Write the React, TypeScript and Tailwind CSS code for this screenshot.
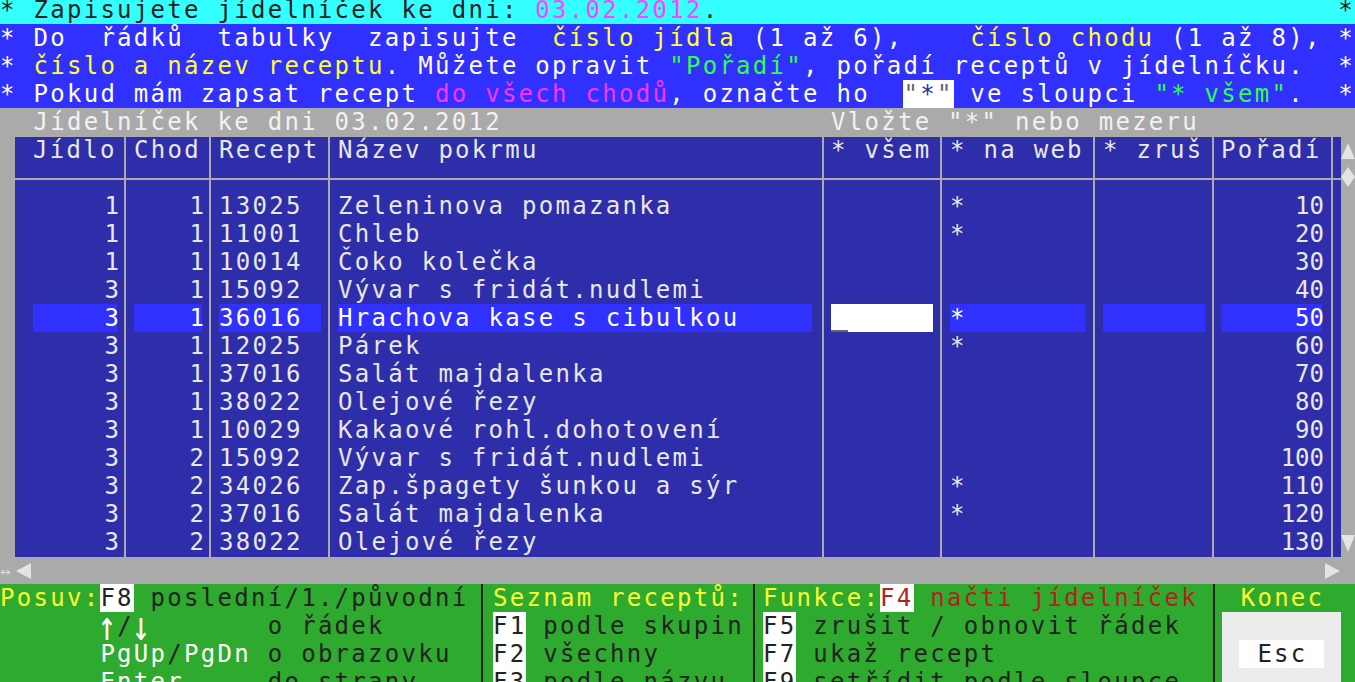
type Col = {
  w: string;
  pl: string;
  cw: string;
  head: string;
  align: string;
};

// column geometry taken from the grid lines of the screen
const cols: Col[] = [
  { w: "w-[111px]", pl: "pl-[18px]", cw: "w-[84px]", head: "Jídlo", align: "text-right" },
  { w: "w-[85px]", pl: "pl-[8px]", cw: "w-[68px]", head: "Chod", align: "text-right" },
  { w: "w-[119px]", pl: "pl-[8px]", cw: "w-[102px]", head: "Recept", align: "text-left" },
  { w: "w-[494px]", pl: "pl-[8px]", cw: "w-[474px]", head: "Název pokrmu", align: "text-left" },
  { w: "w-[118px]", pl: "pl-[7px]", cw: "w-[102px]", head: "* všem", align: "text-left" },
  { w: "w-[153px]", pl: "pl-[8px]", cw: "w-[135px]", head: "* na web", align: "text-left" },
  { w: "w-[119px]", pl: "pl-[8px]", cw: "w-[102px]", head: "* zruš", align: "text-left" },
  { w: "w-[119px]", pl: "pl-[7px]", cw: "w-[101px]", head: "Pořadí", align: "text-right" },
];

const rows: string[][] = [
  ["1", "1", "13025", "Zeleninova pomazanka", "", "*", "", "10"],
  ["1", "1", "11001", "Chleb", "", "*", "", "20"],
  ["1", "1", "10014", "Čoko kolečka", "", "", "", "30"],
  ["3", "1", "15092", "Vývar s fridát.nudlemi", "", "", "", "40"],
  ["3", "1", "36016", "Hrachova kase s cibulkou", "", "*", "", "50"],
  ["3", "1", "12025", "Párek", "", "*", "", "60"],
  ["3", "1", "37016", "Salát majdalenka", "", "", "", "70"],
  ["3", "1", "38022", "Olejové řezy", "", "", "", "80"],
  ["3", "1", "10029", "Kakaové rohl.dohotovení", "", "", "", "90"],
  ["3", "2", "15092", "Vývar s fridát.nudlemi", "", "", "", "100"],
  ["3", "2", "34026", "Zap.špagety šunkou a sýr", "", "*", "", "110"],
  ["3", "2", "37016", "Salát majdalenka", "", "*", "", "120"],
  ["3", "2", "38022", "Olejové řezy", "", "", "", "130"],
];

const SELECTED = 4;

function Key({ children, red = false }: { children: React.ReactNode; red?: boolean }) {
  return (
    <span className={red ? "bg-white text-[#b22222]" : "bg-white text-[#222222]"}>
      {children}
    </span>
  );
}

function Table() {
  return (
    <div className="flex h-[420px] bg-[#2e2eaa] text-[#e8e8e8]">
      {cols.map((c, ci) => (
        <div key={ci} className={"flex flex-col border-r-2 border-[#aaaaaa] " + c.w}>
          <div className={"h-[43px] border-b-2 border-[#aaaaaa] " + c.pl}>
            <div className={"whitespace-pre leading-[26px] " + c.cw}>{c.head}</div>
          </div>
          <div className="pt-[12px]">
            {rows.map((r, ri) => {
              const sel = ri === SELECTED;
              if (sel && ci === 4) {
                return (
                  <div key={ri} className={"h-[28px] " + c.pl}>
                    <div className={"relative h-full bg-white " + c.cw}>
                      <div className="absolute bottom-0 left-0 h-[2px] w-[17px] bg-[#666666]" />
                    </div>
                  </div>
                );
              }
              return (
                <div key={ri} className={"h-[28px] " + c.pl}>
                  <div
                    className={
                      "h-full whitespace-pre " +
                      c.cw +
                      " " +
                      c.align +
                      (c.align === "text-right" ? " -tracking-normal pr-[0px]" : "") +
                      (sel ? " bg-[#3030ff] text-white" : "")
                    }
                  >
                    {c.align === "text-right" ? (
                      <span className="-mr-[2px] inline-block">{r[ci]}</span>
                    ) : (
                      r[ci]
                    )}
                  </div>
                </div>
              );
            })}
          </div>
        </div>
      ))}
      {/* thin strip between last column and the scrollbar */}
      <div className="w-[8px]">
        <div className="h-[43px] border-b-2 border-[#aaaaaa]" />
      </div>
    </div>
  );
}

function VScroll() {
  return (
    <div className="flex w-[14px] flex-col pt-[6px] pb-[5px]">
      <svg width="14" height="16" viewBox="0 0 14 16">
        <polygon points="7,0 14,16 0,16" fill="#e4e4e4" />
      </svg>
      <svg width="14" height="20" viewBox="0 0 14 20" className="mt-[8px]">
        <polygon points="7,0 14,10 7,20 0,10" fill="#e4e4e4" />
      </svg>
      <div className="flex-1" />
      <svg width="14" height="17" viewBox="0 0 14 17">
        <polygon points="0,0 14,0 7,17" fill="#e4e4e4" />
      </svg>
    </div>
  );
}

export default function App() {
  return (
    <div className="h-[682px] w-[1355px] overflow-hidden bg-[#aaaaaa] font-['DejaVu_Sans_Mono',monospace] text-[24px] leading-[28px] tracking-[2.28px]">
      {/* info header */}
      <div className="flex h-[24px] justify-between whitespace-pre bg-[#33ffff] leading-[20px] text-[#222222]">
        <span>
          * Zapisujete jídelníček ke dni: <span className="text-[#ff44ff]">03.02.2012</span>.
        </span>
        <span>*</span>
      </div>
      <div className="bg-[#3030ff] text-white">
        <div className="flex h-[28px] justify-between whitespace-pre">
          <span>
            {"* Do  řádků  tabulky  zapisujte  "}
            <span className="text-[#ffff33]">číslo jídla</span>
            {" (1 až 6),    "}
            <span className="text-[#ffff33]">číslo chodu</span>
            {" (1 až 8),"}
          </span>
          <span>*</span>
        </div>
        <div className="flex h-[28px] justify-between whitespace-pre">
          <span>
            {"* "}
            <span className="text-[#ffff33]">číslo a název receptu</span>
            {". Můžete opravit "}
            <span className="text-[#33ff44]">"Pořadí"</span>
            {", pořadí receptů v jídelníčku."}
          </span>
          <span>*</span>
        </div>
        <div className="flex h-[28px] justify-between whitespace-pre">
          <span>
            {"* Pokud mám zapsat recept "}
            <span className="text-[#ff33ff]">do všech chodů</span>
            {", označte ho  "}
            <span className="bg-white text-[#666666]">
              "<span className="text-[#2e2eaa]">*</span>"
            </span>
            {" ve sloupci "}
            <span className="text-[#33ff44]">"* všem"</span>
            {"."}
          </span>
          <span>*</span>
        </div>
      </div>

      {/* table caption */}
      <div className="flex h-[29px] whitespace-pre text-[#f2f2f2]">
        <span className="w-[831px]">{"  Jídelníček ke dni 03.02.2012"}</span>
        <span>Vložte "*" nebo mezeru</span>
      </div>

      {/* grid */}
      <div className="flex pl-[15px]">
        <Table />
        <VScroll />
      </div>

      {/* horizontal scrollbar */}
      <div className="flex h-[27px] items-center">
        <span className="w-[16px] text-[17px] leading-[14px] tracking-normal text-[#dcdcdc]">↔</span>
        <svg width="15" height="16" viewBox="0 0 15 16">
          <polygon points="0,8 15,0 15,16" fill="#e4e4e4" />
        </svg>
        <div className="flex-1" />
        <svg width="15" height="16" viewBox="0 0 15 16" className="mr-[15px]">
          <polygon points="0,0 15,8 0,16" fill="#e4e4e4" />
        </svg>
      </div>

      {/* key help */}
      <div className="flex h-[98px] overflow-hidden whitespace-pre bg-[#2eaa2e] text-[#222222]">
        <div className="w-[483px] border-r-2 border-[#222222]">
          <div className="h-[28px]">
            <span className="text-[#ffff33]">Posuv:</span>
            <Key>F8</Key>
            {" poslední/1./původní"}
          </div>
          <div className="h-[28px]">
            {"      "}
            <span className="inline-block scale-x-[1.3] scale-y-[1.7] text-white">↑</span>/
            <span className="inline-block scale-x-[1.3] scale-y-[1.7] text-white">↓</span>
            {"       o řádek"}
          </div>
          <div className="h-[28px]">
            {"      "}
            <span className="text-white">PgUp</span>/<span className="text-white">PgDn</span>
            {" o obrazovku"}
          </div>
          <div className="h-[28px]">
            {"      "}
            <span className="text-white">Enter</span>
            {"     do strany"}
          </div>
        </div>
        <div className="w-[272px] border-r-2 border-[#222222] pl-[10px]">
          <div className="h-[28px] text-[#ffff33]">Seznam receptů:</div>
          <div className="h-[28px]">
            <Key>F1</Key> podle skupin
          </div>
          <div className="h-[28px]">
            <Key>F2</Key> všechny
          </div>
          <div className="h-[28px]">
            <Key>F3</Key> podle názvu
          </div>
        </div>
        <div className="w-[460px] border-r-2 border-[#222222] pl-[8px]">
          <div className="h-[28px]">
            <span className="text-[#ffff33]">Funkce:</span>
            <Key red>F4</Key>
            <span className="text-[#b22222]"> načti jídelníček</span>
          </div>
          <div className="h-[28px]">
            <Key>F5</Key> zrušit / obnovit řádek
          </div>
          <div className="h-[28px]">
            <Key>F7</Key> ukaž recept
          </div>
          <div className="h-[28px]">
            <Key>F9</Key> setřídit podle sloupce
          </div>
        </div>
        <div className="pl-[7px]">
          <div className="h-[28px] w-[119px] pl-[2px] text-center text-[#ffff33]">Konec</div>
          <div className="flex h-[70px] w-[119px] justify-center bg-[#ececec] pt-[28px]">
            <div className="h-[28px] w-[85px] bg-white pl-[2px] text-center">Esc</div>
          </div>
        </div>
      </div>
    </div>
  );
}
